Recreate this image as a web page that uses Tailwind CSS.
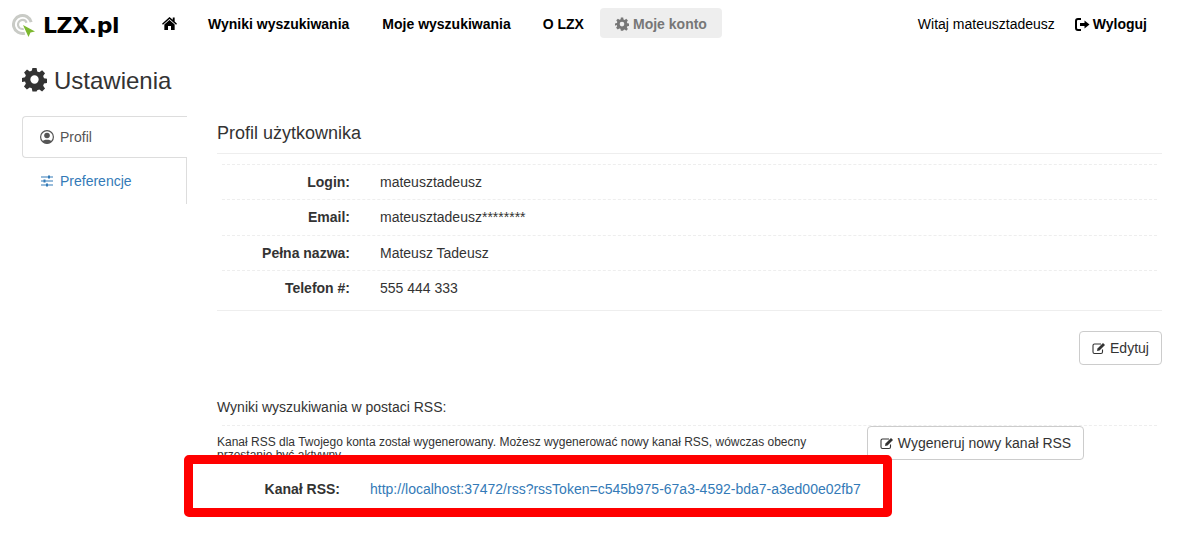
<!DOCTYPE html>
<html lang="pl">
  <head>
    <meta charset="UTF-8" />
    <title>LZX.pl - Ustawienia</title>
    <script src="https://cdn.jsdelivr.net/npm/@tailwindcss/browser@4"></script>
  </head>

  <body class="relative h-[537px] w-[1184px] overflow-hidden bg-white font-['Liberation_Sans',Arial,sans-serif] text-sm text-[#333]">
    <!-- top bar -->
    <nav class="flex h-[48px] items-center text-black">
      <div class="ml-[12px] flex w-[150px] items-center">
        <svg class="h-[28px] w-[26px]" viewBox="0 0 26 28">
          <circle cx="10.500" cy="14.500" r="9" fill="none" stroke="#c9cbc6" stroke-width="3" stroke-dasharray="42 15" transform="rotate(75 10.500 14.500)" />
          <circle cx="10.500" cy="14.500" r="4.500" fill="none" stroke="#c9cbc6" stroke-width="2.200" stroke-dasharray="20 9" transform="rotate(75 10.500 14.500)" />
          <path d="M11 15 L23 21.500 L18.500 22.500 L16.500 27 Z" fill="#7cb82f" />
        </svg>
        <span class="ml-[5px] translate-y-[2px] font-['DejaVu_Sans',sans-serif] text-[22px] leading-none font-bold tracking-[-0.4px]">LZX.pl</span>
      </div>
      <svg class="h-[15px] w-[15px] -translate-y-[1px]" viewBox="0 0 16 15"><path d="M8 0.500 L11.500 3.600 V1.200 H13.500 V5.400 L16 7.700 L15 8.700 L8 2.600 L1 8.700 L0 7.700 Z M8 3.800 L13.500 8.600 V14.500 H9.600 V10.200 H6.400 V14.500 H2.500 V8.600 Z" fill="#000" /></svg>
      <a class="ml-[31px] font-bold">Wyniki wyszukiwania</a>
      <a class="ml-[33px] font-bold">Moje wyszukiwania</a>
      <a class="ml-[32px] font-bold">O LZX</a>
      <a class="ml-[16px] flex h-[30px] w-[122px] -translate-y-[1px] items-center justify-center gap-[4px] rounded bg-[#eee] pt-[1px] font-bold text-[#777]">
        <svg class="h-[14px] w-[14px]" viewBox="0 0 24 24"><path fill="#777" fill-rule="evenodd" d="M10 1h4l.6 3.200 2 .8L19.300 3.200l2.800 2.800-1.800 2.700.8 2 3.200.6v4l-3.200.6-.8 2 1.800 2.700-2.800 2.800-2.700-1.800-2 .8L14 23.500h-4l-.6-3.200-2-.8-2.700 1.800-2.800-2.800 1.800-2.700-.8-2L0 15v-4l3.200-.6.8-2L2.200 5.700 5 3 7.700 4.800l2-.8zM12 8.200a4 4 0 1 0 0 8 4 4 0 0 0 0-8z" /></svg>
        Moje konto
      </a>
      <span class="ml-auto">Witaj mateusztadeusz</span>
      <a class="mr-[37px] ml-[20px] flex items-center gap-[3px] font-bold">
        <svg class="h-[13px] w-[15px]" viewBox="0 0 15 13"><path d="M6 1H3a2 2 0 0 0-2 2v7a2 2 0 0 0 2 2h3" fill="none" stroke="#000" stroke-width="2" /><path d="M5 5h4.500V2.500L14.500 6.500 9.500 10.500V8H5z" fill="#000" /></svg>
        Wyloguj
      </a>
    </nav>

    <!-- page title -->
    <h1 class="mt-[20px] ml-[22px] flex h-[26px] items-center gap-[7px] text-2xl leading-none text-[#333]">
      <svg class="h-[25px] w-[25px] -translate-y-[2px]" viewBox="0 0 24 24"><path fill="#333" fill-rule="evenodd" d="M10 1h4l.6 3.200 2 .8 2.700-1.800 2.800 2.800-1.800 2.700.8 2 3 .6v4l-3 .6-.8 2 1.800 2.700-2.800 2.800-2.700-1.800-2 .8L14 23.500h-4l-.6-3-2-.8-2.700 1.800-2.800-2.800 1.800-2.700-.8-2L0 14.500v-4l2.900-.6.8-2L2 5.200 4.800 2.400l2.700 1.800 2-.8zM12 8a4 4 0 1 0 0 8 4 4 0 0 0 0-8z" /></svg>
      <span>Ustawienia</span>
    </h1>

    <div class="mt-[22px] ml-[22px] flex">
      <!-- side tabs -->
      <aside class="w-[165px] shrink-0">
        <div class="flex h-[42px] items-center gap-[6px] rounded-l border border-r-0 border-[#ddd] pl-[17px] text-[#555]">
          <svg class="h-[14px] w-[14px]" viewBox="0 0 14 14"><circle cx="7" cy="7" r="6.400" fill="none" stroke="#555" stroke-width="1.200" /><circle cx="7" cy="5.500" r="2.800" fill="#555" /><path d="M2.400 11.500 C3 9 11 9 11.600 11.500 A6 6 0 0 1 2.400 11.500Z" fill="#555" /></svg>
          Profil
        </div>
        <div class="flex h-[46px] items-center gap-[7px] border-r border-[#ddd] pl-[19px] text-[#337ab7]">
          <svg class="h-[12px] w-[12px]" viewBox="0 0 12 12"><path d="M0 2h12M0 6h12M0 10h12" stroke="#337ab7" stroke-width="1.200" /><rect x="7" y="0.500" width="2" height="3" fill="#337ab7" /><rect x="2.500" y="4.500" width="2" height="3" fill="#337ab7" /><rect x="5" y="8.500" width="2" height="3" fill="#337ab7" /></svg>
          Preferencje
        </div>
      </aside>

      <!-- main panel -->
      <main class="ml-[30px] w-[945px]">
        <h2 class="border-b border-[#eee] pt-[7px] pb-[10px] text-lg leading-[20px]">Profil użytkownika</h2>
        <div class="mt-[10px] border-b border-[#eee] pb-[4px]">
          <dl class="mx-[5px]">
            <div class="flex h-[35px] items-center border-t border-dashed border-[#eee]"><dt class="w-[128px] text-right font-bold">Login:</dt><dd class="ml-[30px]">mateusztadeusz</dd></div>
            <div class="flex h-[36px] items-center border-t border-dashed border-[#eee] pb-[1px]"><dt class="w-[128px] text-right font-bold">Email:</dt><dd class="ml-[30px]">mateusztadeusz********</dd></div>
            <div class="flex h-[35px] items-center border-t border-dashed border-[#eee]"><dt class="w-[128px] text-right font-bold">Pełna nazwa:</dt><dd class="ml-[30px]">Mateusz Tadeusz</dd></div>
            <div class="flex h-[36px] items-center border-t border-dashed border-[#eee] pb-[1px]"><dt class="w-[128px] text-right font-bold">Telefon #:</dt><dd class="ml-[30px]">555 444 333</dd></div>
          </dl>
        </div>

        <div class="mt-[20px] flex justify-end">
          <button class="flex h-[34px] w-[83px] items-center justify-center gap-[4px] rounded border border-[#ccc] bg-white text-[#333]">
            <svg class="h-[14px] w-[14px]" viewBox="0 0 14 13"><path d="M9 2.500H2.500a1.500 1.500 0 0 0-1.500 1.500v6.500A1.500 1.500 0 0 0 2.500 12H9a1.500 1.500 0 0 0 1.500-1.500V8" fill="none" stroke="#333" stroke-width="1.100" /><path d="M5 9.500l.5-2.500L11 1.500 13 3.500 7.500 9z" fill="#333" /></svg>
            Edytuj
          </button>
        </div>

        <p class="mt-[33px] h-[18px] leading-[18px]">Wyniki wyszukiwania w postaci RSS:</p>
        <div class="mx-[5px] mt-[9px] border-t border-dashed border-[#eee]"></div>
        <div class="flex">
          <p class="mt-[10px] h-[24px] w-[625px] text-xs leading-[13px]">Kanał RSS dla Twojego konta został wygenerowany. Możesz wygenerować nowy kanał RSS, wówczas obecny przestanie być aktywny.</p>
          <button class="ml-[25px] flex h-[34px] w-[217px] items-center justify-center gap-[4px] rounded border border-[#ccc] bg-white text-[#333]">
            <svg class="h-[14px] w-[14px]" viewBox="0 0 14 13"><path d="M9 2.500H2.500a1.500 1.500 0 0 0-1.500 1.500v6.500A1.500 1.500 0 0 0 2.500 12H9a1.500 1.500 0 0 0 1.500-1.500V8" fill="none" stroke="#333" stroke-width="1.100" /><path d="M5 9.500l.5-2.500L11 1.500 13 3.500 7.500 9z" fill="#333" /></svg>
            Wygeneruj nowy kanał RSS
          </button>
        </div>
        <div class="mt-[15px] flex h-[27px] items-center">
          <span class="w-[123px] text-right font-bold">Kanał RSS:</span>
          <a class="ml-[30px] text-[#337ab7]">http://localhost:37472/rss?rssToken=c545b975-67a3-4592-bda7-a3ed00e02fb7</a>
        </div>
      </main>
    </div>

    <!-- red highlight drawn on top of the screenshot -->
    <div class="pointer-events-none absolute top-[455px] left-[184px] h-[62px] w-[708px] rounded-[5px] border-[9px] border-[#ff0000]"></div>
  </body>
</html>
